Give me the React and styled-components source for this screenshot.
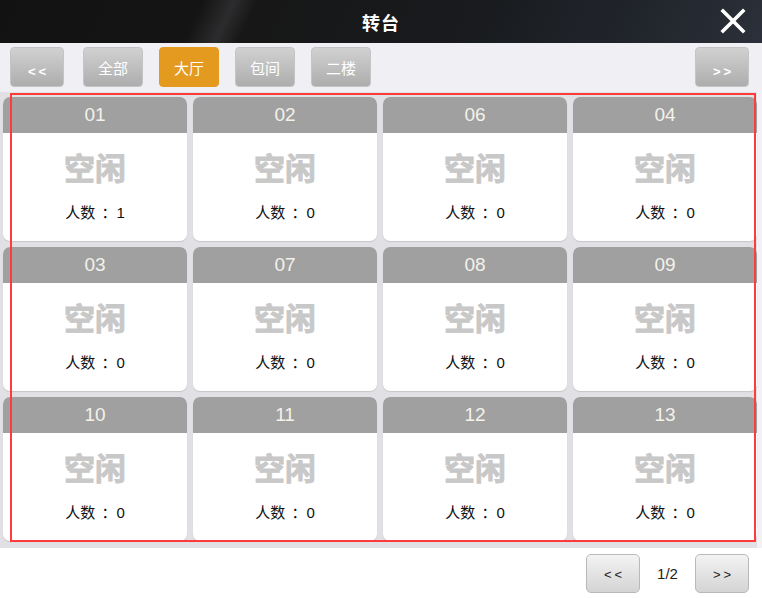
import styled, { createGlobalStyle } from 'styled-components';

const GlobalStyle = createGlobalStyle`
  html, body {
    margin: 0;
    padding: 0;
    background: #ffffff;
  }
  body {
    font-family: 'Liberation Sans', 'Noto Sans CJK SC', sans-serif;
  }
  * {
    box-sizing: border-box;
  }
`;

const Window = styled.div`
  position: relative;
  width: 762px;
  height: 598px;
  display: flex;
  flex-direction: column;
  overflow: hidden;
  background: #ffffff;
`;

const TitleBar = styled.div`
  position: relative;
  height: 43px;
  flex-shrink: 0;
  display: flex;
  align-items: center;
  justify-content: center;
  background: linear-gradient(
    115deg,
    #121212 0%,
    #141414 26%,
    #2c2c2e 30%,
    #171717 33%,
    #181a1d 60%,
    #22262d 85%,
    #2b303a 100%
  );
`;

const Title = styled.h1`
  margin: 0;
  color: #ffffff;
  font-size: 18px;
  font-weight: bold;
  letter-spacing: 1px;
`;

const CloseButton = styled.button`
  position: absolute;
  right: 16px;
  top: 8px;
  width: 26px;
  height: 26px;
  padding: 0;
  background: none;
  border: none;
  cursor: pointer;
`;

const Toolbar = styled.div`
  height: 49px;
  flex-shrink: 0;
  display: flex;
  align-items: center;
  gap: 16px;
  padding: 0 13px 1px 10px;
  background: #f0eff4;
`;

const TabButton = styled.button`
  width: ${(props) => (props.$arrow ? '54px' : '60px')};
  height: 40px;
  margin-right: ${(props) => (props.$first ? '3px' : '0')};
  margin-left: ${(props) => (props.$pushRight ? 'auto' : '0')};
  border-radius: 4px;
  border: 1px solid ${(props) => (props.$active ? '#e39a1f' : '#c4c4c6')};
  background: ${(props) =>
    props.$active
      ? '#e39a1f'
      : 'linear-gradient(to bottom, #d2d1d2 0%, #adadad 100%)'};
  color: #ffffff;
  font-family: 'Liberation Sans', 'Noto Sans CJK SC', sans-serif;
  font-size: ${(props) => (props.$arrow ? '13px' : '15px')};
  font-weight: ${(props) => (props.$arrow ? 'bold' : 'normal')};
  letter-spacing: ${(props) => (props.$arrow ? '3px' : '0')};
  padding: ${(props) => (props.$arrow ? '8px 0 0 3px' : '0')};
  cursor: pointer;
`;

const GridArea = styled.div`
  height: 456px;
  flex-shrink: 0;
  display: grid;
  grid-template-columns: repeat(4, 184px);
  grid-auto-rows: 144px;
  gap: 6px;
  padding: 5px 5px 7px 3px;
  background: #e1e1e5;
  border-right: 5px solid #f2f2f4;
`;

const Card = styled.div`
  display: flex;
  flex-direction: column;
  align-items: center;
  background: #ffffff;
  border-radius: 7px;
  overflow: hidden;
  box-shadow: 0 1px 1px rgba(0, 0, 0, 0.12);
`;

const CardHead = styled.div`
  width: 100%;
  height: 36px;
  display: flex;
  align-items: center;
  justify-content: center;
  background: #a0a0a0;
  color: #f4f2ea;
  font-size: 19px;
`;

const Status = styled.div`
  margin-top: 16px;
  color: #c8c8c8;
  font-size: 31px;
  font-weight: bold;
  line-height: 36px;
  font-family: 'Noto Sans CJK SC', sans-serif;
  -webkit-text-stroke: 0.9px #c8c8c8;
`;

const People = styled.div`
  margin-top: 18px;
  color: #111111;
  font-size: 15px;
  line-height: 20px;
  word-spacing: 2px;
`;

const Footer = styled.div`
  flex: 1;
  display: flex;
  align-items: center;
  justify-content: flex-end;
  padding: 0 13px 0 0;
  background: #ffffff;
`;

const PageButton = styled.button`
  width: 54px;
  height: 39px;
  border-radius: 5px;
  border: 1px solid #b9b9b9;
  background: linear-gradient(to bottom, #f3f3f3 0%, #d4d4d4 100%);
  color: #222222;
  font-family: 'Liberation Sans', sans-serif;
  font-size: 13px;
  letter-spacing: 3px;
  padding: 3px 0 0 3px;
  cursor: pointer;
`;

const PageInfo = styled.span`
  width: 55px;
  text-align: center;
  color: #222222;
  font-size: 15px;
`;

const Highlight = styled.div`
  position: absolute;
  left: 10px;
  top: 93px;
  width: 746px;
  height: 449px;
  border: 2px solid #ff3b3b;
  pointer-events: none;
`;

const tables = [
  { no: '01', people: 1 },
  { no: '02', people: 0 },
  { no: '06', people: 0 },
  { no: '04', people: 0 },
  { no: '03', people: 0 },
  { no: '07', people: 0 },
  { no: '08', people: 0 },
  { no: '09', people: 0 },
  { no: '10', people: 0 },
  { no: '11', people: 0 },
  { no: '12', people: 0 },
  { no: '13', people: 0 },
];

const tabs = ['全部', '大厅', '包间', '二楼'];

const App = () => {
  return (
    <>
      <GlobalStyle />
      <Window>
        <TitleBar>
          <Title>转台</Title>
          <CloseButton aria-label="close">
            <svg width="26" height="26" viewBox="0 0 26 26">
              <path
                d="M3 3 L23 23 M23 3 L3 23"
                stroke="#ffffff"
                strokeWidth="3.6"
                strokeLinecap="square"
              />
            </svg>
          </CloseButton>
        </TitleBar>

        <Toolbar>
          <TabButton $arrow $first>
            &lt;&lt;
          </TabButton>
          {tabs.map((t) => (
            <TabButton key={t} $active={t === '大厅'}>
              {t}
            </TabButton>
          ))}
          <TabButton $arrow $pushRight>
            &gt;&gt;
          </TabButton>
        </Toolbar>

        <GridArea>
          {tables.map((t) => (
            <Card key={t.no}>
              <CardHead>{t.no}</CardHead>
              <Status>空闲</Status>
              <People>人数 ：{t.people}</People>
            </Card>
          ))}
        </GridArea>

        <Footer>
          <PageButton>&lt;&lt;</PageButton>
          <PageInfo>1/2</PageInfo>
          <PageButton>&gt;&gt;</PageButton>
        </Footer>

        <Highlight />
      </Window>
    </>
  );
};

export default App;
